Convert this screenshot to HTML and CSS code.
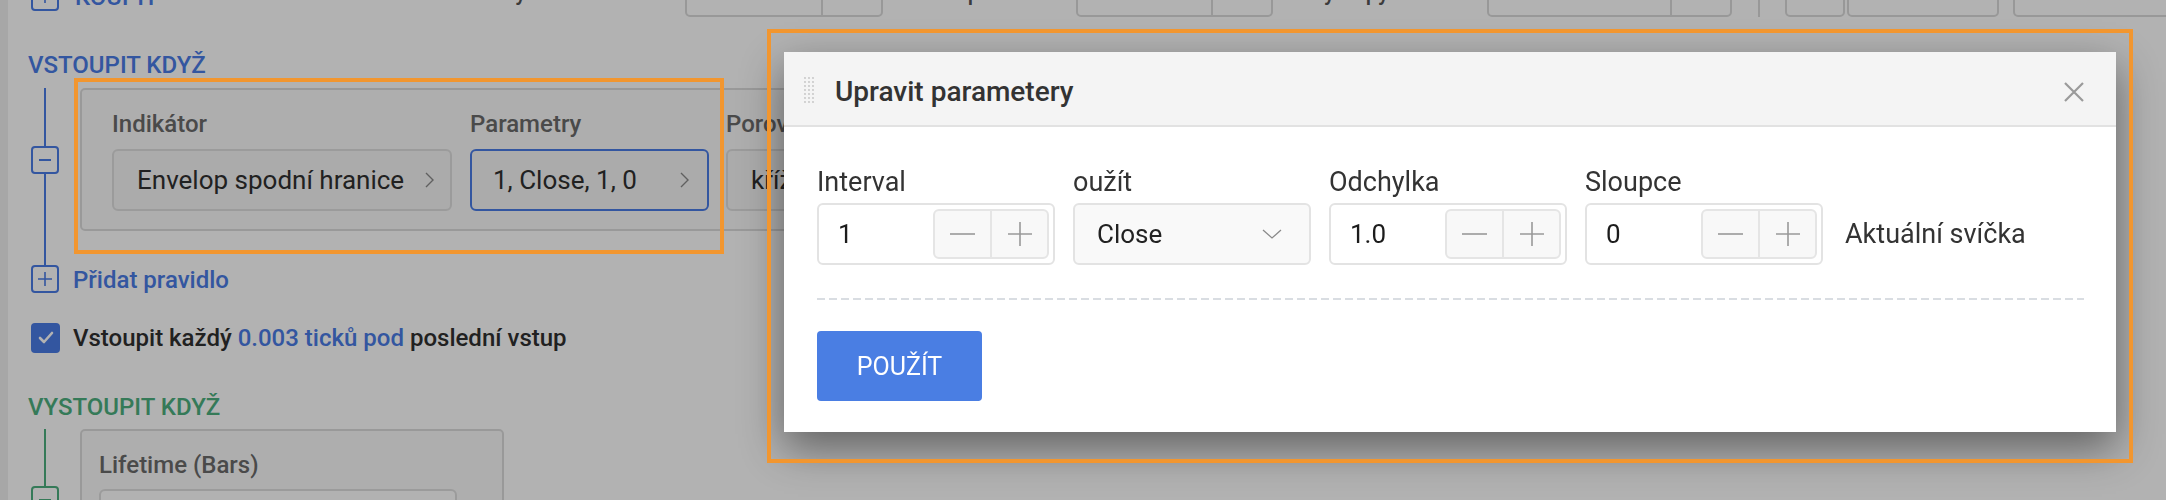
FILE: index.html
```html
<!DOCTYPE html>
<html lang="cs">
<head>
<meta charset="utf-8">
<title>Upravit parametery</title>
<link rel="stylesheet" href="styles.css">
</head>
<body>
<div class="page">
  <div class="content">
    <div class="toprow">
      <div class="buy">
        <span class="node node-blue"><svg width="14" height="14" viewBox="0 0 14 14"><path d="M7 1v12M1 7h12" stroke="currentColor" stroke-width="1.6" fill="none"/></svg></span>
        <span class="buy-label">KOUPIT</span>
      </div>
      <span class="tlabel tl1">Hodnoty</span>
      <div class="tinput ti1"><span class="tsuffix"></span></div>
      <span class="tlabel tl2">Stop loss</span>
      <div class="tinput ti2"><span class="tsuffix"></span></div>
      <span class="tlabel tl3">Výstupy</span>
      <div class="tinput ti3"><span class="tsuffix"></span></div>
      <span class="tsep"></span>
      <div class="tbox tb1"><svg width="22" height="22" viewBox="0 0 22 22"><circle cx="11" cy="11" r="7" stroke="#555" stroke-width="2" fill="none"/><circle cx="11" cy="11" r="2.5" fill="#555"/></svg></div>
      <div class="tbox tb2"></div>
      <div class="tbox tb3"></div>
    </div>

    <h3 class="sect-title entry-title">VSTOUPIT KDYŽ</h3>
    <div class="tree-row entry-row">
      <div class="gutter">
        <span class="line"></span>
        <span class="node node-blue"><svg width="12" height="2" viewBox="0 0 12 2"><path d="M0 1h12" stroke="currentColor" stroke-width="2"/></svg></span>
        <span class="line"></span>
      </div>
      <div class="rule-card">
        <div class="rc-field f-ind">
          <div class="rc-label">Indikátor</div>
          <div class="rc-btn"><span>Envelop spodní hranice</span><svg class="chev" width="9" height="16" viewBox="0 0 9 16"><path d="M1 1l7 7-7 7" stroke="#8a8a8a" stroke-width="1.4" fill="none"/></svg></div>
        </div>
        <div class="rc-field f-par">
          <div class="rc-label">Parametry</div>
          <div class="rc-btn rc-active"><span>1, Close, 1, 0</span><svg class="chev" width="9" height="16" viewBox="0 0 9 16"><path d="M1 1l7 7-7 7" stroke="#8a8a8a" stroke-width="1.4" fill="none"/></svg></div>
        </div>
        <div class="rc-field f-cmp">
          <div class="rc-label">Porovnání</div>
          <div class="rc-btn"><span>kříží nad</span><svg class="chev" width="9" height="16" viewBox="0 0 9 16"><path d="M1 1l7 7-7 7" stroke="#8a8a8a" stroke-width="1.4" fill="none"/></svg></div>
        </div>
      </div>
    </div>
    <div class="tree-row add-row">
      <div class="gutter">
        <span class="line line-fixed"></span>
        <span class="node node-blue"><svg width="14" height="14" viewBox="0 0 14 14"><path d="M7 0v14M0 7h14" stroke="currentColor" stroke-width="1.6" fill="none"/></svg></span>
      </div>
      <span class="add-label">Přidat pravidlo</span>
    </div>
    <div class="check-row">
      <span class="check"><svg width="16" height="13" viewBox="0 0 16 13"><path d="M2 7l4 4 8-9" stroke="#fff" stroke-width="2.6" fill="none" stroke-linecap="round" stroke-linejoin="round"/></svg></span>
      <span class="check-label">Vstoupit každý <span class="hl-text">0.003 ticků pod</span> poslední vstup</span>
    </div>

    <h3 class="sect-title exit-title">VYSTOUPIT KDYŽ</h3>
    <div class="tree-row exit-row">
      <div class="gutter">
        <span class="line"></span>
        <span class="node node-green"><svg width="12" height="2" viewBox="0 0 12 2"><path d="M0 1h12" stroke="currentColor" stroke-width="2"/></svg></span>
        <span class="line"></span>
      </div>
      <div class="exit-card">
        <div class="rc-label">Lifetime (Bars)</div>
        <div class="exit-input"></div>
      </div>
    </div>
  </div>
</div>

<div class="overlay"></div>
<div class="hl hl-rule"></div>
<div class="hl hl-modal"></div>

<div class="modal">
  <div class="m-head">
    <svg class="grip" width="10" height="26" viewBox="0 0 10 26">
      <g fill="#c2c2c2">
        <circle cx="1" cy="1" r="0.9"/><circle cx="5" cy="1" r="0.9"/><circle cx="9" cy="1" r="0.9"/>
        <circle cx="1" cy="5" r="0.9"/><circle cx="5" cy="5" r="0.9"/><circle cx="9" cy="5" r="0.9"/>
        <circle cx="1" cy="9" r="0.9"/><circle cx="5" cy="9" r="0.9"/><circle cx="9" cy="9" r="0.9"/>
        <circle cx="1" cy="13" r="0.9"/><circle cx="5" cy="13" r="0.9"/><circle cx="9" cy="13" r="0.9"/>
        <circle cx="1" cy="17" r="0.9"/><circle cx="5" cy="17" r="0.9"/><circle cx="9" cy="17" r="0.9"/>
        <circle cx="1" cy="21" r="0.9"/><circle cx="5" cy="21" r="0.9"/><circle cx="9" cy="21" r="0.9"/>
        <circle cx="1" cy="25" r="0.9"/><circle cx="5" cy="25" r="0.9"/><circle cx="9" cy="25" r="0.9"/>
      </g>
    </svg>
    <span class="m-title">Upravit parametery</span>
    <svg class="m-close" width="20" height="20" viewBox="0 0 20 20"><path d="M1 1l18 18M19 1L1 19" stroke="#9a9a9a" stroke-width="2.2" fill="none"/></svg>
  </div>
  <div class="m-body">
    <div class="m-fields">
      <div class="m-field">
        <div class="m-label">Interval</div>
        <div class="m-input">
          <span>1</span>
          <span class="m-step">
            <span><svg width="25" height="2" viewBox="0 0 25 2"><path d="M0 1h25" stroke="#999" stroke-width="1.6"/></svg></span>
            <span><svg width="24" height="24" viewBox="0 0 24 24"><path d="M12 0v24M0 12h24" stroke="#999" stroke-width="1.6" fill="none"/></svg></span>
          </span>
        </div>
      </div>
      <div class="m-field">
        <div class="m-label">oužít</div>
        <div class="m-input m-select">
          <span>Close</span>
          <svg width="20" height="10" viewBox="0 0 20 10"><path d="M1 1l9 8 9-8" stroke="#8a8a8a" stroke-width="1.3" fill="none"/></svg>
        </div>
      </div>
      <div class="m-field">
        <div class="m-label">Odchylka</div>
        <div class="m-input">
          <span>1.0</span>
          <span class="m-step">
            <span><svg width="25" height="2" viewBox="0 0 25 2"><path d="M0 1h25" stroke="#999" stroke-width="1.6"/></svg></span>
            <span><svg width="24" height="24" viewBox="0 0 24 24"><path d="M12 0v24M0 12h24" stroke="#999" stroke-width="1.6" fill="none"/></svg></span>
          </span>
        </div>
      </div>
      <div class="m-field">
        <div class="m-label">Sloupce</div>
        <div class="m-input">
          <span>0</span>
          <span class="m-step">
            <span><svg width="25" height="2" viewBox="0 0 25 2"><path d="M0 1h25" stroke="#999" stroke-width="1.6"/></svg></span>
            <span><svg width="24" height="24" viewBox="0 0 24 24"><path d="M12 0v24M0 12h24" stroke="#999" stroke-width="1.6" fill="none"/></svg></span>
          </span>
        </div>
      </div>
      <div class="m-after">Aktuální svíčka</div>
    </div>
    <div class="m-dash"></div>
    <button class="m-apply">POUŽÍT</button>
  </div>
</div>
</body>
</html>
```

FILE: styles.css
```css
html, body {
  margin: 0;
  height: 500px;
  overflow: hidden;
}
body {
  font-family: Roboto, "Noto Sans", "Liberation Sans", sans-serif;
  background: #fff;
  color: #303030;
}
.page {
  height: 500px;
  border-left: 8px solid #efefef;
  overflow: hidden;
}
.content {
  padding-left: 23px;
}

/* top (scrolled away) row */
.toprow {
  display: flex;
  align-items: flex-end;
  height: 50px;
  margin-top: -33px;
}
.toprow > * { flex: none; }
.buy {
  display: flex;
  align-items: center;
  gap: 16px;
  width: 129px;
  margin-bottom: 6px;
  color: #4a7be5;
}
.buy-label {
  font-size: 24px;
  font-weight: 500;
  line-height: 28px;
}
.tlabel {
  font-size: 22px;
  font-weight: 500;
  line-height: 26px;
  color: #555;
  margin-bottom: 11px;
  white-space: nowrap;
}
.tl1 { margin-left: 240px; width: 126px; text-align: right; }
.tl2 { margin-left: 52px; width: 100px; }
.tl3 { margin-left: 37px; width: 150px; }
.tinput {
  height: 50px;
  box-sizing: border-box;
  border: 2px solid #dadada;
  border-radius: 5px;
  display: flex;
  justify-content: flex-end;
}
.tsuffix {
  width: 58px;
  border-left: 2px solid #dadada;
}
.ti1 { margin-left: 159px; width: 198px; }
.ti2 { margin-left: 41px; width: 197px; }
.ti3 { margin-left: 27px; width: 245px; }
.tsep {
  margin-left: 26px;
  width: 2px;
  height: 50px;
  background: #dadada;
}
.tbox {
  height: 50px;
  box-sizing: border-box;
  border: 2px solid #dadada;
  border-radius: 5px;
  display: flex;
  align-items: center;
  justify-content: center;
}
.tb1 { margin-left: 25px; width: 60px; }
.tb2 { margin-left: 2px; width: 152px; }
.tb3 { margin-left: 14px; width: 170px; }

/* sections */
.sect-title {
  margin: 34px 0 0 -3px;
  font-size: 24px;
  line-height: 28px;
  font-weight: 500;
}
.entry-title { color: #4a7be5; }
.exit-title { color: #4caf7f; margin-top: 40px; }

.tree-row {
  display: flex;
}
.entry-row { margin-top: 9px; color: #4a7be5; }
.exit-row { margin-top: 8px; color: #4caf7f; }
.gutter {
  width: 28px;
  flex: none;
  display: flex;
  flex-direction: column;
  align-items: center;
  margin-right: 21px;
}
.line {
  width: 2px;
  flex: 1;
  background: currentColor;
}
.line-fixed {
  flex: none;
  height: 34px;
}
.node {
  width: 28px;
  height: 28px;
  box-sizing: border-box;
  border: 2px solid currentColor;
  border-radius: 4px;
  display: flex;
  align-items: center;
  justify-content: center;
  flex: none;
}
.node-blue { color: #4a7be5; }
.node-green { color: #4caf7f; }

.rule-card {
  width: 1120px;
  flex: none;
  box-sizing: border-box;
  border: 2px solid #dcdcdc;
  border-radius: 5px;
  background: #fafafa;
  padding: 20px 0 18px 30px;
  display: flex;
  gap: 17px;
}
.rc-label {
  font-size: 24px;
  line-height: 28px;
  font-weight: 500;
  color: #6b6b6b;
  margin-bottom: 11px;
  white-space: nowrap;
}
.rc-btn {
  height: 62px;
  box-sizing: border-box;
  border: 2px solid #dedede;
  border-radius: 6px;
  background: #f5f5f5;
  display: flex;
  align-items: center;
  justify-content: space-between;
  padding: 0 16px 0 23px;
  font-size: 26px;
  color: #303030;
  white-space: nowrap;
}
.rc-active {
  border-color: #4a7be5;
  padding-left: 21px;
  padding-right: 18px;
}
.f-ind { width: 340px; }
.f-par { width: 239px; margin-left: 1px; }
.f-cmp { width: 300px; }

.add-row {
  align-items: flex-end;
  color: #4a7be5;
}
.add-row .gutter { margin-right: 14px; }
.add-label {
  height: 28px;
  line-height: 30px;
  font-size: 24px;
  font-weight: 500;
  color: #4a7be5;
  white-space: nowrap;
}

.check-row {
  display: flex;
  align-items: center;
  gap: 13px;
  margin-top: 29px;
}
.check {
  width: 29px;
  height: 30px;
  border-radius: 4px;
  background: #4a7be5;
  display: flex;
  align-items: center;
  justify-content: center;
  flex: none;
}
.check-label {
  font-size: 24px;
  font-weight: 500;
  line-height: 30px;
  padding-top: 1px;
  color: #303030;
  white-space: nowrap;
}
.hl-text { color: #4a7be5; }

.exit-card {
  width: 424px;
  flex: none;
  box-sizing: border-box;
  border: 2px solid #dcdcdc;
  border-radius: 5px;
  background: #fafafa;
  padding: 20px 17px 18px;
}
.exit-card .rc-label { margin-bottom: 10px; }
.exit-input {
  width: 358px;
  height: 62px;
  box-sizing: border-box;
  border: 2px solid #dedede;
  border-radius: 6px;
  background: #fff;
}

/* overlay + highlights */
.overlay {
  position: fixed;
  inset: 0;
  background: rgba(0, 0, 0, 0.3);
  z-index: 10;
}
.hl {
  position: absolute;
  box-sizing: border-box;
  border: 4px solid #f2962f;
  z-index: 30;
}
.hl-rule { left: 74px; top: 78px; width: 650px; height: 176px; }
.hl-modal { left: 767px; top: 29px; width: 1366px; height: 434px; }

/* modal */
.modal {
  position: absolute;
  left: 784px;
  top: 52px;
  width: 1332px;
  background: #fff;
  box-shadow: 0 16px 40px rgba(0, 0, 0, 0.45);
  z-index: 20;
}
.m-head {
  height: 67px;
  padding: 6px 32px 0 20px;
  background: #f4f4f4;
  border-bottom: 2px solid #e2e2e2;
  display: flex;
  align-items: center;
}
.grip {
  flex: none;
  margin-top: -4px;
}
.m-title {
  margin-left: 21px;
  font-size: 28px;
  font-weight: 500;
  color: #333;
}
.m-close {
  margin-left: auto;
  flex: none;
}
.m-body {
  padding: 40px 32px 31px 33px;
}
.m-fields {
  display: flex;
  align-items: flex-end;
  gap: 18px;
}
.m-field {
  width: 238px;
  flex: none;
}
.m-label {
  font-size: 27px;
  line-height: 30px;
  color: #333;
  margin-bottom: 6px;
}
.m-input {
  height: 62px;
  box-sizing: border-box;
  border: 2px solid #e3e3e3;
  border-radius: 6px;
  display: flex;
  align-items: center;
  padding: 0 4px 0 19px;
  font-size: 26px;
  color: #1c1c1c;
}
.m-step {
  margin-left: auto;
  display: flex;
  width: 116px;
  height: 50px;
  box-sizing: border-box;
  border: 2px solid #e5e5e5;
  border-radius: 6px;
  background: #f8f8f8;
}
.m-step > span {
  flex: 1;
  display: flex;
  align-items: center;
  justify-content: center;
}
.m-step > span + span {
  border-left: 2px solid #e5e5e5;
}
.m-select {
  background: #f9f9f9;
  justify-content: space-between;
  padding: 0 27px 0 22px;
  color: #222;
}
.m-after {
  height: 62px;
  display: flex;
  align-items: center;
  margin-left: 4px;
  font-size: 27px;
  color: #333;
  white-space: nowrap;
}
.m-dash {
  height: 2px;
  margin-top: 33px;
  background: repeating-linear-gradient(90deg, #d9dde2 0 8px, transparent 8px 12px);
}
.m-apply {
  display: block;
  margin-top: 31px;
  width: 165px;
  height: 70px;
  border: 0;
  border-radius: 4px;
  background: #4a7ee3;
  color: #fff;
  font-family: inherit;
  font-size: 25px;
  font-weight: 400;
  padding: 0;
}
```
